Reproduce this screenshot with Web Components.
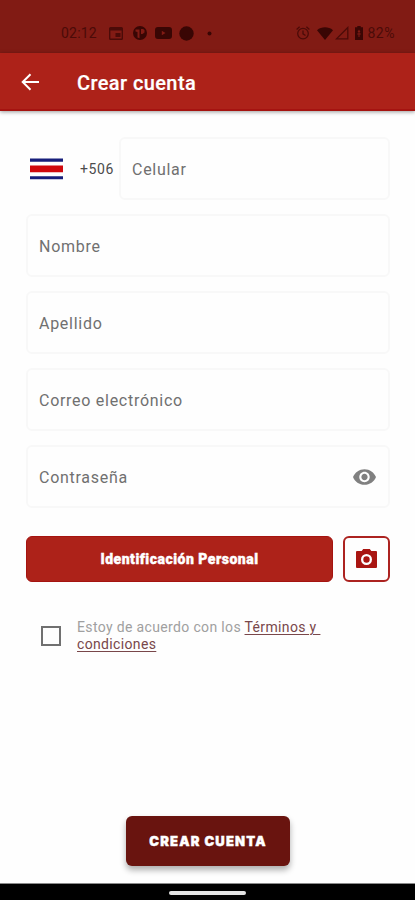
<!DOCTYPE html>
<html lang="es">
<head>
<meta charset="UTF-8">
<meta name="viewport" content="width=device-width, initial-scale=1.0">
<title>Crear cuenta</title>
<style>
    body {
        margin: 0;
        background-color: #fefefe;
        font-family: Roboto, "Liberation Sans", sans-serif;
    }
</style>
</head>
<body>
<sign-up-page></sign-up-page>
<script>
class statusBar extends HTMLElement {
    constructor() {
        super();
        this.attachShadow({ mode: 'open' });
    }

    connectedCallback() {
        this.shadowRoot.innerHTML = `
            <style>
                :host {
                    display: flex;
                    justify-content: space-between;
                    align-items: center;
                    box-sizing: border-box;
                    height: 53px;
                    padding: 13px 20px 0 61px;
                    background-color: #811b14;
                    color: #4b0b08;
                    font-size: 14px;
                }
                .group { display: flex; align-items: center; }
                .time { width: 48px; letter-spacing: 0.2px; }
                .battery { letter-spacing: 0.5px; }
                svg { display: block; fill: currentColor; }
                .dark { color: #390604; }
            </style>
            <div class="group">
                <span class="time">02:12</span>
                <svg width="14" height="13" viewBox="0 0 14 13"><path fill-rule="evenodd" d="M1.5 0h11A1.5 1.5 0 0 1 14 1.5v10a1.5 1.5 0 0 1-1.5 1.5h-11A1.5 1.5 0 0 1 0 11.5v-10A1.5 1.5 0 0 1 1.5 0zM1.4 3.5v8h11.2v-8zM6.5 6h5v4h-5z"/></svg>
                <svg class="dark" style="margin-left:10px" width="14" height="14" viewBox="0 0 14 14"><path fill-rule="evenodd" d="M7 0a7 7 0 1 1 0 14A7 7 0 0 1 7 0zM2.500 3.500v2l2 .5v5.500l2 .8V3.500zM8 3v5h1.500l2-1.500V4L10 3z"/></svg>
                <svg class="dark" style="margin-left:8px" width="17" height="12" viewBox="0 0 17 12"><path fill-rule="evenodd" d="M3 0h11a3 3 0 0 1 3 3v6a3 3 0 0 1-3 3H3a3 3 0 0 1-3-3V3a3 3 0 0 1 3-3zM6.8 3.8v4.400L10.500 6z"/></svg>
                <svg class="dark" style="margin-left:7px" width="15" height="15" viewBox="0 0 15 15"><circle cx="7.5" cy="7.5" r="7.2"/></svg>
                <svg class="dark" style="margin-left:13px" width="5" height="5" viewBox="0 0 5 5"><circle cx="2.5" cy="2.5" r="2"/></svg>
            </div>
            <div class="group">
                <svg width="14" height="14" viewBox="0 0 14 14"><g fill="none" stroke="currentColor" stroke-width="1.3"><circle cx="7" cy="7.6" r="5.3"/><path d="M7 4.5v3.4l2.5 1.6M.6 3.4 3.6.8M13.4 3.4l-3-2.6"/></g></svg>
                <svg class="dark" style="margin-left:7px" width="16" height="13" viewBox="0 0 16 13"><path d="M0 3.2C4.5-.6 11.500-.6 16 3.200L8 13z"/></svg>
                <svg style="margin-left:2px" width="14" height="14" viewBox="0 0 14 14"><path d="M12.800 1.500v11.300H1.500z" fill="none" stroke="currentColor" stroke-width="1.300"/></svg>
                <svg class="dark" style="margin-left:6px" width="8" height="14" viewBox="0 0 8 14"><path fill-rule="evenodd" d="M2.300 0h3.400v1.300H8V14H0V1.300h2.300zM4 3.500 2.500 6h1v1.500h-1.300v1h1.300V11h1V8.500h1.300v-1H4.500V6h1z"/></svg>
                <span class="battery" style="margin-left:5px">82%</span>
            </div>
        `;
    }
}

class appBar extends HTMLElement {
    constructor() {
        super();
        this.attachShadow({ mode: 'open' });
    }

    connectedCallback() {
        this.shadowRoot.innerHTML = `
            <style>
                :host {
                    display: flex;
                    align-items: center;
                    box-sizing: border-box;
                    height: 58px;
                    padding-left: 21px;
                    gap: 37px;
                    background-color: #ad2219;
                    border-bottom: 2px solid #a51310;
                    box-shadow: 0 1px 4px rgb(0 0 0 / 0.4);
                    color: #fff;
                }
                svg { display: block; margin-top: 2px; }
                h1 {
                    margin: 3px 0 0;
                    font-size: 20px;
                    font-weight: 500;
                    letter-spacing: 0.4px;
                    -webkit-text-stroke: 0.2px currentColor;
                }
            </style>
            <svg width="19" height="18" viewBox="0 0 19 18" fill="none" stroke="currentColor" stroke-width="2"><path d="M18 9H2M9.500 1.200 1.700 9l7.800 7.800"/></svg>
            <h1><slot></slot></h1>
        `;
    }
}

class formField extends HTMLElement {
    constructor() {
        super();
        this.attachShadow({ mode: 'open' });
    }

    connectedCallback() {
        this.shadowRoot.innerHTML = `
            <style>
                :host {
                    display: flex;
                    align-items: center;
                    justify-content: space-between;
                    box-sizing: border-box;
                    height: 63px;
                    padding: 0 12px 0 11px;
                    border: 2px solid #f8f8f8;
                    border-radius: 6px;
                    background-color: #fefefe;
                    color: #707070;
                    font-size: 16px;
                    letter-spacing: 0.72px;
                }
                span { padding-top: 1px; }
            </style>
            <span><slot></slot></span>
            <slot name="icon"></slot>
        `;
    }
}

class countryCode extends HTMLElement {
    constructor() {
        super();
        this.attachShadow({ mode: 'open' });
    }

    connectedCallback() {
        this.shadowRoot.innerHTML = `
            <style>
                :host {
                    display: flex;
                    align-items: center;
                    box-sizing: border-box;
                    width: 93px;
                    padding-left: 4px;
                    gap: 17px;
                    color: #4c4c4c;
                    font-size: 14px;
                    letter-spacing: 0.6px;
                }
                svg { display: block; }
            </style>
            <svg width="33" height="22" viewBox="0 0 34 22" preserveAspectRatio="none">
                <path fill="#fff" d="M0 0h34v22H0z"/>
                <path fill="#171f7b" d="M0 .5h34v3.200H0zM0 18.200h34v3.100H0z"/>
                <path fill="#d0090d" d="M0 7.400h34v6.800H0z"/>
            </svg>
            <span><slot></slot></span>
        `;
    }
}

class idUpload extends HTMLElement {
    constructor() {
        super();
        this.attachShadow({ mode: 'open' });
    }

    connectedCallback() {
        this.shadowRoot.innerHTML = `
            <style>
                :host { display: flex; gap: 10px; height: 46px; }
                button {
                    box-sizing: border-box;
                    margin: 0;
                    padding: 0;
                    border-radius: 6px;
                    font-family: inherit;
                }
                .label {
                    flex: 1;
                    border: 1px solid #a51310;
                    background-color: #ad2219;
                    color: #fff;
                    font-size: 14px;
                    font-weight: 900;
                    letter-spacing: 0.5px;
                    -webkit-text-stroke: 0.4px currentColor;
                }
                .camera {
                    display: flex;
                    justify-content: center;
                    align-items: center;
                    width: 47px;
                    padding-bottom: 2px;
                    border: 2px solid #ac2320;
                    background-color: #fefefe;
                }
            </style>
            <button class="label"><slot></slot></button>
            <button class="camera" aria-label="Cámara">
                <svg width="21" height="19" viewBox="0 0 21 19"><path fill="#a91511" fill-rule="evenodd" d="M7.200 0h6.600l1.500 2H20a1 1 0 0 1 1 1v15a1 1 0 0 1-1 1H1a1 1 0 0 1-1-1V3a1 1 0 0 1 1-1h4.700zM10.500 5a5.500 5.500 0 1 0 0 11 5.500 5.500 0 0 0 0-11zM10.500 7.300a3.200 3.200 0 1 1 0 6.400 3.200 3.200 0 0 1 0-6.400z"/></svg>
            </button>
        `;
    }
}

class termsCheck extends HTMLElement {
    constructor() {
        super();
        this.attachShadow({ mode: 'open' });
    }

    connectedCallback() {
        this.shadowRoot.innerHTML = `
            <style>
                :host {
                    display: flex;
                    align-items: center;
                    gap: 16px;
                    padding-left: 15px;
                    color: #a0a0a0;
                    font-size: 14px;
                    line-height: 16.500px;
                    letter-spacing: 0.35px;
                }
                .box {
                    box-sizing: border-box;
                    width: 20px;
                    height: 20px;
                    border: 2px solid #707070;
                }
                ::slotted(span) {
                    color: #79474a;
                    text-decoration: underline;
                    text-decoration-thickness: 1px;
                    text-underline-offset: 2px;
                }
            </style>
            <div class="box" role="checkbox" aria-checked="false"></div>
            <div><slot></slot></div>
        `;
    }
}

class submitButton extends HTMLElement {
    constructor() {
        super();
        this.attachShadow({ mode: 'open' });
    }

    connectedCallback() {
        this.shadowRoot.innerHTML = `
            <style>
                :host { display: flex; justify-content: center; }
                button {
                    width: 164px;
                    height: 50px;
                    margin: 0;
                    padding: 0;
                    border: none;
                    border-radius: 6px;
                    background-color: #69140f;
                    box-shadow: 0 4px 6px rgb(0 0 0 / 0.32);
                    color: #fff;
                    font-family: Inter, Roboto, sans-serif;
                    font-size: 13px;
                    font-weight: 900;
                    letter-spacing: 1.200px;
                    -webkit-text-stroke: 0.4px currentColor;
                }
            </style>
            <button><slot></slot></button>
        `;
    }
}

class navBar extends HTMLElement {
    constructor() {
        super();
        this.attachShadow({ mode: 'open' });
    }

    connectedCallback() {
        this.shadowRoot.innerHTML = `
            <style>
                :host {
                    display: flex;
                    justify-content: center;
                    align-items: center;
                    box-sizing: border-box;
                    height: 17px;
                    padding-top: 2px;
                    border-top: 1px solid #8a8a8a;
                    background-color: #000;
                }
                div {
                    width: 77px;
                    height: 4px;
                    border-radius: 2px;
                    background-color: #e4e4e4;
                }
            </style>
            <div></div>
        `;
    }
}

class signUpPage extends HTMLElement {
    constructor() {
        super();
        this.attachShadow({ mode: 'open' });
    }

    connectedCallback() {
        this.shadowRoot.innerHTML = `
            <style>
                :host {
                    display: flex;
                    flex-direction: column;
                    width: 100%;
                    height: 100vh;
                    overflow: hidden;
                }
                main {
                    flex: 1;
                    display: flex;
                    flex-direction: column;
                    padding: 26px 25px 17px 26px;
                }
                .fields {
                    display: flex;
                    flex-direction: column;
                    gap: 14.100px;
                }
                .phone { display: flex; }
                .phone form-field { flex: 1; }
                id-upload { margin-top: 28px; }
                terms-check { margin-top: 37px; }
                submit-button { margin-top: auto; }
            </style>
            <status-bar></status-bar>
            <app-bar>Crear cuenta</app-bar>
            <main>
                <section class="fields">
                    <div class="phone">
                        <country-code>+506</country-code>
                        <form-field>Celular</form-field>
                    </div>
                    <form-field>Nombre</form-field>
                    <form-field>Apellido</form-field>
                    <form-field>Correo electrónico</form-field>
                    <form-field>Contraseña
                        <svg slot="icon" width="23" height="16" viewBox="0 0 22 15"><path fill="#808080" d="M11 0C6 0 1.730 3.110 0 7.500 1.730 11.890 6 15 11 15s9.270-3.110 11-7.500C20.270 3.110 16 0 11 0zm0 12.500c-2.760 0-5-2.240-5-5s2.240-5 5-5 5 2.240 5 5-2.240 5-5 5zm0-8c-1.660 0-3 1.340-3 3s1.340 3 3 3 3-1.340 3-3-1.340-3-3-3z"/></svg>
                    </form-field>
                </section>
                <id-upload>Identificación Personal</id-upload>
                <terms-check>Estoy de acuerdo con los <span>Términos y&nbsp;<br>condiciones</span></terms-check>
                <submit-button>CREAR CUENTA</submit-button>
            </main>
            <nav-bar></nav-bar>
        `;
    }
}

customElements.define('status-bar', statusBar);
customElements.define('app-bar', appBar);
customElements.define('form-field', formField);
customElements.define('country-code', countryCode);
customElements.define('id-upload', idUpload);
customElements.define('terms-check', termsCheck);
customElements.define('submit-button', submitButton);
customElements.define('nav-bar', navBar);
customElements.define('sign-up-page', signUpPage);
</script>
</body>
</html>
